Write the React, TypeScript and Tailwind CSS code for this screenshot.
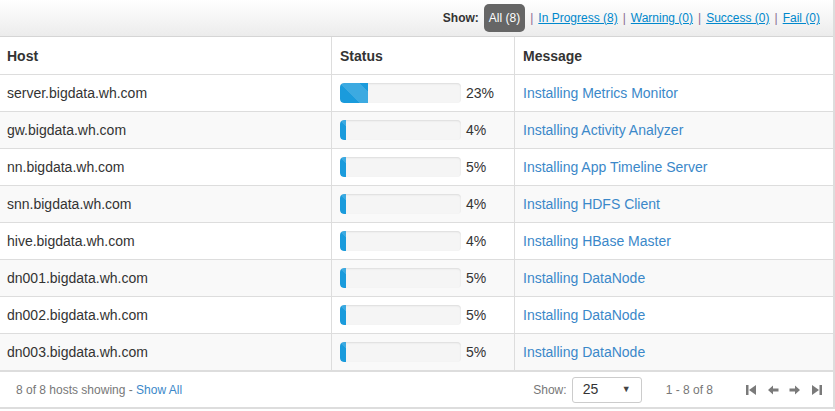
const rows = [
  { host: "server.bigdata.wh.com", pct: 23, msg: "Installing Metrics Monitor" },
  { host: "gw.bigdata.wh.com", pct: 4, msg: "Installing Activity Analyzer" },
  { host: "nn.bigdata.wh.com", pct: 5, msg: "Installing App Timeline Server" },
  { host: "snn.bigdata.wh.com", pct: 4, msg: "Installing HDFS Client" },
  { host: "hive.bigdata.wh.com", pct: 4, msg: "Installing HBase Master" },
  { host: "dn001.bigdata.wh.com", pct: 5, msg: "Installing DataNode" },
  { host: "dn002.bigdata.wh.com", pct: 5, msg: "Installing DataNode" },
  { host: "dn003.bigdata.wh.com", pct: 5, msg: "Installing DataNode" },
];

const filters = ["In Progress (8)", "Warning (0)", "Success (0)", "Fail (0)"];

function Progress({ pct }: { pct: number }) {
  return (
    <div className="w-[121px] h-[20px] rounded-[4px] bg-[#f5f5f5] shadow-[inset_0_1px_2px_rgba(0,0,0,0.1)] overflow-hidden">
      <div
        className="h-full rounded-l-[4px] bg-[#1a9bdc] bg-[linear-gradient(45deg,rgba(255,255,255,0.15)_25%,transparent_25%,transparent_50%,rgba(255,255,255,0.15)_50%,rgba(255,255,255,0.15)_75%,transparent_75%,transparent)] bg-[length:40px_40px]"
        style={{ width: `${Math.max(pct, 5)}%` }}
      />
    </div>
  );
}

function PagerIcon({ kind }: { kind: "first" | "prev" | "next" | "last" }) {
  return (
    <svg width="12" height="12" viewBox="0 0 12 12" fill="#7a7a7a">
      {kind === "first" && (
        <>
          <rect x="1" y="1" width="2.5" height="10" />
          <path d="M11 1v10L4 6z" />
        </>
      )}
      {kind === "last" && (
        <>
          <rect x="8.5" y="1" width="2.5" height="10" />
          <path d="M1 1v10l7-5z" />
        </>
      )}
      {kind === "prev" && <path d="M6 1.5 1 6l5 4.5V7.4h5.5V4.6H6z" />}
      {kind === "next" && <path d="M6 1.5 11 6l-5 4.5V7.4H0.5V4.6H6z" />}
    </svg>
  );
}

export default function App() {
  return (
    <div className="w-[835px] h-[411px] bg-white font-['Liberation_Sans',Arial,sans-serif] text-[#333]">
      <div className="w-[835px] border-r-2 border-b-2 border-[#ddd]">
        {/* filter bar */}
        <div className="h-[37px] flex items-center justify-end pr-[13px] bg-[linear-gradient(#ffffff,#ececec)] border-b border-[#d5d5d5] text-[12px]">
          <span className="font-bold mr-[5px]">Show:</span>
          <span className="h-[28px] px-[5px] flex items-center rounded-[5px] bg-[#666] text-white">All (8)</span>
          {filters.map((f) => (
            <span key={f} className="flex items-center">
              <span className="mx-[5px] text-[#8a6b93]">|</span>
              <a className="text-[#0088cc] underline cursor-pointer">{f}</a>
            </span>
          ))}
        </div>

        {/* table */}
        <div className="grid grid-cols-[332px_183px_1fr] text-[14px]">
          <div className="h-[38px] flex items-center px-[7px] font-bold border-b border-r border-[#ddd] pt-[2px]">Host</div>
          <div className="h-[38px] flex items-center px-[8px] font-bold border-b border-r border-[#ddd] pt-[2px]">Status</div>
          <div className="h-[38px] flex items-center px-[8px] font-bold border-b border-[#ddd] pt-[2px]">Message</div>
          {rows.map((r, i) => {
            const bg = i % 2 === 1 ? "bg-[#f9f9f9]" : "bg-white";
            return (
              <div key={r.host} className="contents">
                <div className={`h-[37px] flex items-center px-[7px] border-b border-r border-[#ddd] ${bg}`}>{r.host}</div>
                <div className={`h-[37px] flex items-center gap-[5px] px-[8px] border-b border-r border-[#ddd] ${bg}`}>
                  <Progress pct={r.pct} />
                  <span>{r.pct}%</span>
                </div>
                <div className={`h-[37px] flex items-center px-[8px] border-b border-[#ddd] text-[#3b88c9] ${bg}`}>{r.msg}</div>
              </div>
            );
          })}
        </div>

        {/* footer */}
        <div className="h-[36px] flex items-center px-[16px] text-[12px] text-[#777] border-t border-[#ddd]">
          <span>
            8 of 8 hosts showing - <a className="text-[#3b88c9] cursor-pointer">Show All</a>
          </span>
          <div className="ml-auto flex items-center">
            <span className="mr-[5px]">Show:</span>
            <div className="w-[70px] h-[26px] border border-[#ccc] rounded-[3px] flex items-center justify-between px-[10px] text-[14px] text-[#333]">
              <span>25</span>
              <span className="text-[9px] text-[#444]">▼</span>
            </div>
            <span className="ml-[24px] mr-[32px]">1 - 8 of 8</span>
            <div className="flex items-center gap-[10px] mr-[-6px]">
              <PagerIcon kind="first" />
              <PagerIcon kind="prev" />
              <PagerIcon kind="next" />
              <PagerIcon kind="last" />
            </div>
          </div>
        </div>
      </div>
    </div>
  );
}
